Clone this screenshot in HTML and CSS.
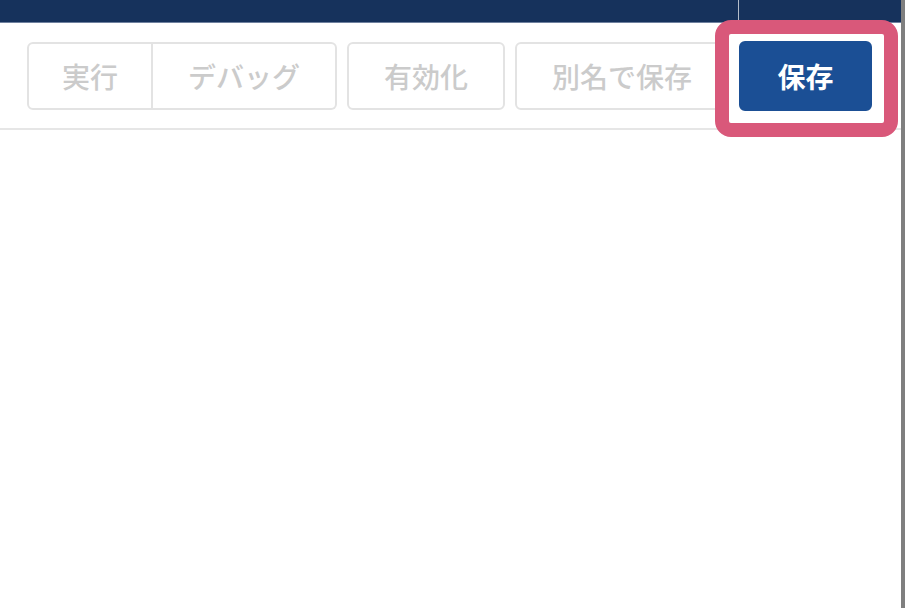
FILE: index.html
```html
<!DOCTYPE html>
<html lang="ja">
<head>
<meta charset="utf-8">
<title>保存</title>
<link rel="stylesheet" href="styles.css">
</head>
<body>
<div class="frame">
  <header class="topbar">
    <div class="topbar-main"></div>
    <div class="topbar-side"></div>
  </header>
  <div class="toolbar">
    <div class="btn-group">
      <button class="btn btn-run">実行</button>
      <button class="btn btn-debug">デバッグ</button>
    </div>
    <button class="btn btn-activate">有効化</button>
    <button class="btn btn-saveas">別名で保存</button>
    <button class="btn btn-save">保存</button>
  </div>
  <main class="content"></main>
  <div class="highlight"></div>
</div>
</body>
</html>
```
FILE: styles.css
```css
html, body {
  margin: 0;
  padding: 0;
  background: #ffffff;
}

.frame {
  position: relative;
  width: 901px;
  height: 608px;
  background: #ffffff;
  border-right: 4px solid #7f7f7f;
  font-family: "Noto Sans CJK JP", "Noto Sans", sans-serif;
  overflow: hidden;
}

.topbar {
  display: flex;
  height: 22px;
  background: #16325c;
  border-bottom: 1px solid #6f819f;
}

.topbar-main {
  width: 738px;
}

.topbar-side {
  flex: 1;
  border-left: 1px solid #b4bdca;
}

.toolbar {
  display: flex;
  align-items: center;
  gap: 10px;
  height: 105px;
  padding: 0 29px 0 27px;
  border-bottom: 2px solid #e6e6e6;
}

.btn-group {
  display: flex;
}

.btn {
  box-sizing: border-box;
  height: 68px;
  margin: 0;
  padding: 0;
  background: #ffffff;
  border: 2px solid #e3e3e3;
  border-radius: 6px;
  color: #cbcbcb;
  font-family: "Noto Sans CJK JP", "Noto Sans", sans-serif;
  font-size: 28px;
  font-weight: 500;
  line-height: 1;
  text-align: center;
}

.btn-run {
  width: 126px;
  border-radius: 6px 0 0 6px;
}

.btn-debug {
  width: 184px;
  border-left: none;
  border-radius: 0 6px 6px 0;
}

.btn-activate {
  width: 158px;
}

.btn-saveas {
  width: 214px;
}

.btn-save {
  width: 133px;
  height: 70px;
  background: #1b4f95;
  border-color: #1b4f95;
  color: #ffffff;
  font-weight: 700;
}

.content {
  display: block;
}

.highlight {
  position: absolute;
  left: 715px;
  top: 20px;
  width: 183px;
  height: 117px;
  box-sizing: border-box;
  border: 14px solid #d9587a;
  border-radius: 16px;
}
```
